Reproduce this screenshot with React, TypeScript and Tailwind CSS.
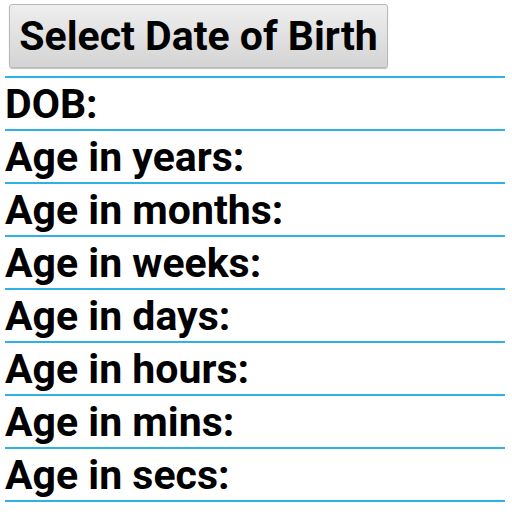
import React from 'react';

const labels = [
  'DOB:',
  'Age in years:',
  'Age in months:',
  'Age in weeks:',
  'Age in days:',
  'Age in hours:',
  'Age in mins:',
  'Age in secs:',
];

const App: React.FC = () => {
  return (
    <div className="w-[512px] h-[512px] bg-white pl-[5px] pr-[7px] pt-[4px]" style={{ fontFamily: 'Roboto, "Liberation Sans", sans-serif' }}>
      <button className="ml-[4px] w-[379px] h-[64px] rounded-[3px] border border-[#b8b8b8] bg-gradient-to-b from-[#eeeeee] to-[#d4d4d4] shadow-[0_1px_1px_rgba(0,0,0,0.25)] text-black font-bold text-[41px] leading-none">
        Select Date of Birth
      </button>
      <div className="mt-[8px] h-[2px] bg-[#2fb1e3]" />
      {labels.map(label => (
        <div key={label}>
          <div className="h-[51px] flex items-end pb-[4px] text-black font-bold text-[41px] leading-none">
            {label}
          </div>
          <div className="h-[2px] bg-[#2fb1e3]" />
        </div>
      ))}
    </div>
  );
};

export default App;
